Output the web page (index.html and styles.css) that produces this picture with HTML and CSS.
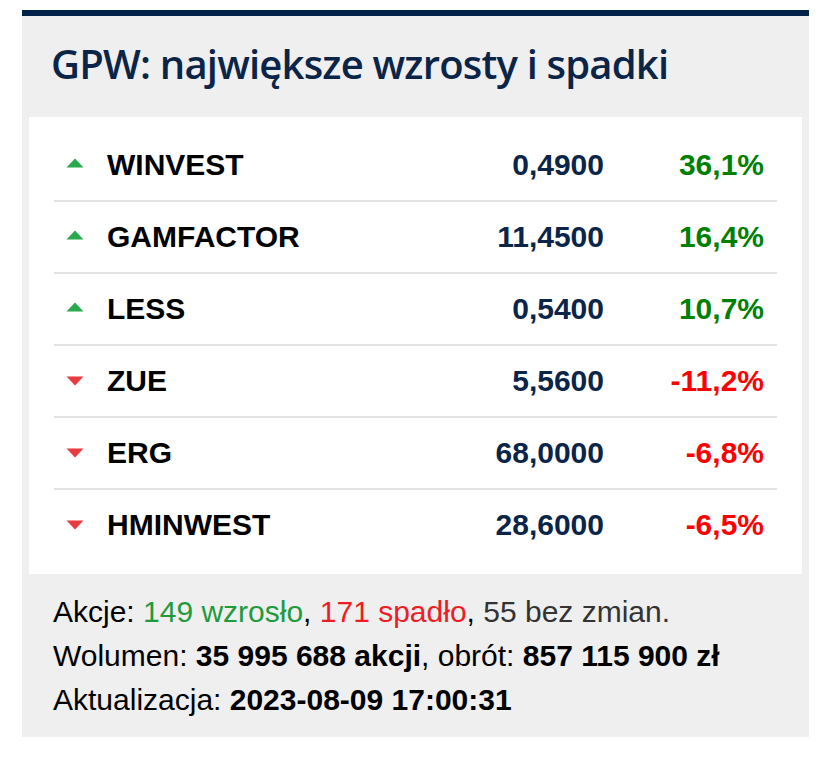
FILE: index.html
```html
<!DOCTYPE html>
<html lang="pl">
<head>
<meta charset="utf-8">
<title>GPW: największe wzrosty i spadki</title>
<link rel="stylesheet" href="styles.css">
</head>
<body>
<section class="panel">
  <h2 class="title">GPW: największe wzrosty i spadki</h2>
  <div class="box">
    <div class="row">
      <span class="ico"><svg width="18" height="10" viewBox="0 0 18 10"><polygon points="9,0.5 17.5,9.5 0.5,9.5" class="up"/></svg></span>
      <span class="name">WINVEST</span><span class="price">0,4900</span><span class="chg pos">36,1%</span>
    </div>
    <div class="row">
      <span class="ico"><svg width="18" height="10" viewBox="0 0 18 10"><polygon points="9,0.5 17.5,9.5 0.5,9.5" class="up"/></svg></span>
      <span class="name">GAMFACTOR</span><span class="price">11,4500</span><span class="chg pos">16,4%</span>
    </div>
    <div class="row">
      <span class="ico"><svg width="18" height="10" viewBox="0 0 18 10"><polygon points="9,0.5 17.5,9.5 0.5,9.5" class="up"/></svg></span>
      <span class="name">LESS</span><span class="price">0,5400</span><span class="chg pos">10,7%</span>
    </div>
    <div class="row">
      <span class="ico down"><svg width="18" height="10" viewBox="0 0 18 10"><polygon points="0.5,0.5 17.5,0.5 9,9.5" class="dn"/></svg></span>
      <span class="name">ZUE</span><span class="price">5,5600</span><span class="chg neg">-11,2%</span>
    </div>
    <div class="row">
      <span class="ico down"><svg width="18" height="10" viewBox="0 0 18 10"><polygon points="0.5,0.5 17.5,0.5 9,9.5" class="dn"/></svg></span>
      <span class="name">ERG</span><span class="price">68,0000</span><span class="chg neg">-6,8%</span>
    </div>
    <div class="row">
      <span class="ico down"><svg width="18" height="10" viewBox="0 0 18 10"><polygon points="0.5,0.5 17.5,0.5 9,9.5" class="dn"/></svg></span>
      <span class="name">HMINWEST</span><span class="price">28,6000</span><span class="chg neg">-6,5%</span>
    </div>
  </div>
  <div class="summary">
    <p>Akcje: <span class="g">149 wzrosło</span>, <span class="r">171 spadło</span>, <span class="n">55 bez zmian.</span></p>
    <p>Wolumen: <b>35 995 688 akcji</b>, obrót: <b>857 115 900 zł</b></p>
    <p>Aktualizacja: <b>2023-08-09 17:00:31</b></p>
  </div>
</section>
</body>
</html>
```

FILE: styles.css
```css
html, body {
  margin: 0;
  padding: 0;
  background: #ffffff;
}

.panel {
  margin: 10px 0 0 22px;
  width: 787px;
  background: #efefef;
  border-top: 6px solid #00214a;
  padding: 0 0 15px 0;
}

.title {
  margin: 0;
  padding: 24px 0 29px 29px;
  font-family: "Open Sans", "Noto Sans", sans-serif;
  font-weight: 600;
  font-size: 40px;
  letter-spacing: -0.8px;
  line-height: 48px;
  color: #0a2547;
}

.box {
  margin: 0 7px;
  background: #ffffff;
  padding: 13px 25px 14px 25px;
}

.row {
  display: grid;
  grid-template-columns: 53px 1fr auto 160px 13px;
  align-items: center;
  height: 70px;
  border-bottom: 2px solid #e3e3e3;
  font-family: "Liberation Sans", Arial, sans-serif;
  font-weight: bold;
  font-size: 30px;
}

.row::after {
  content: "";
}

.row:last-child {
  border-bottom: none;
}

.ico {
  display: flex;
  padding-left: 12px;
  margin-top: -4px;
}

.ico.down {
  margin-top: 0;
}

.up {
  fill: #2aa84a;
}

.dn {
  fill: #ea3a3f;
}

.name {
  color: #000000;
}

.price {
  color: #0a2547;
  text-align: right;
}

.chg {
  text-align: right;
}

.pos {
  color: #008000;
}

.neg {
  color: #ff0000;
}

.summary {
  padding: 16px 31px 0 31px;
  font-family: "Liberation Sans", Arial, sans-serif;
  font-size: 30px;
  line-height: 44px;
  color: #000000;
}

.summary p {
  margin: 0;
}

.summary b {
  font-weight: bold;
}

.g {
  color: #1f9a3c;
}

.r {
  color: #ee1c25;
}

.n {
  color: #333333;
}
```
